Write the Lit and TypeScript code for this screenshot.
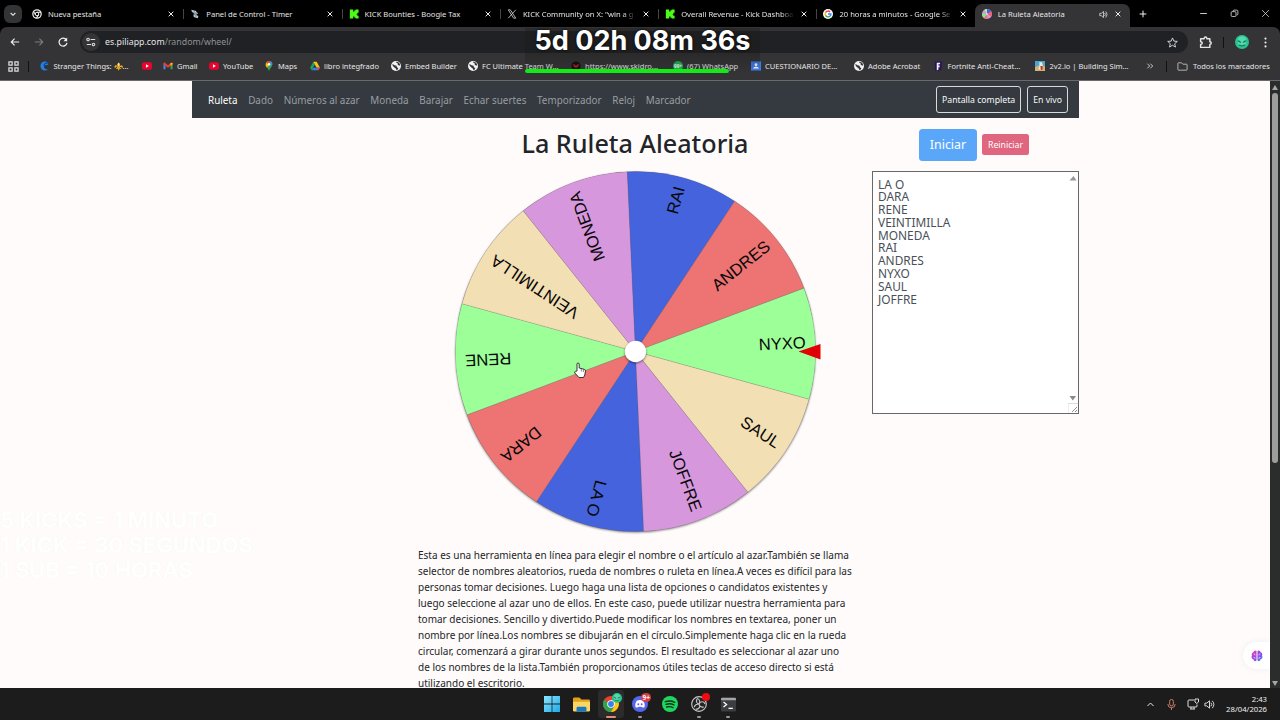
import { LitElement, html, css, svg } from "lit";
import { customElement } from "lit/decorators.js";
import { classMap } from "lit/directives/class-map.js";

const icon = (name: string, size = 10) =>
  html`<svg width=${size} height=${size} viewBox="0 0 24 24" style="flex:none;display:block">${glyphs[name]}</svg>`;

const youtube = svg`<rect x="0" y="3" width="24" height="18" rx="5" fill="#e8042c"/><path d="M9.5 8v8l7-4z" fill="#fff"/>`;
const globe = svg`<circle cx="12" cy="12" r="12" fill="#f2f2f2"/><path d="M3 8c4-1 4 3 8 3s2 5 5 5 1 4-2 6c-2-1-2-4-4-5S4 13 3 8zM12 2c0 4 5 2 4 5s4 3 6 4c0-5-4-9-10-9z" fill="#333436"/>`;
const kick = svg`<path d="M2 1h8v5h3V3h3V1h7v8h-3v3h-2v1h2v3h3v7h-7v-2h-3v-3h-3v5H2z" fill="#4dfc16"/>`;
const chrome = svg`
  <circle cx="12" cy="12" r="12" fill="#e9412f"/>
  <path d="M12 12 1.6 6A12 12 0 0 0 12 24l5-9z" fill="#2da54f"/>
  <path d="M12 12h-0l5.2 3L12 24A12 12 0 0 0 22.5 6.5H12z" fill="#fbc718"/>
  <circle cx="12" cy="12" r="5.7" fill="#fff"/><circle cx="12" cy="12" r="4.4" fill="#3b7fee"/>`;

const glyphs: Record<string, unknown> = {
  youtube,
  globe,
  kick,
  chrome,
  newtab: svg`<circle cx="12" cy="12" r="10" fill="none" stroke="#eee" stroke-width="3"/><circle cx="12" cy="12" r="4.2" fill="none" stroke="#eee" stroke-width="2.5"/><path d="M12 8h10M8.5 14 3.5 6M15.500 14l-5 8" stroke="#eee" stroke-width="2.500"/>`,
  panel: svg`<path d="M3 2l12 3v4L5 8zM9 6l8 2 3 4-9-2zM8 13l12 4-1 5-10-3z" fill="#b9cbd2"/><path d="M9 6l7 12" stroke="#8ba3ac" stroke-width="5"/>`,
  x: svg`<path d="M3 2h5l13 20h-5zM21 2 3 22" fill="none" stroke="#d0d0d0" stroke-width="2"/>`,
  google: svg`<circle cx="12" cy="12" r="12" fill="#fff"/><g fill="none" stroke-width="3.400"><path d="M17 7A7 7 0 0 0 6 8.500" stroke="#ea4335"/><path d="M6 8.500a7 7 0 0 0 0 7" stroke="#fbbc05"/><path d="M6 15.500A7 7 0 0 0 17 17" stroke="#34a853"/><path d="M17 17a7 7 0 0 0 2-5h-7" stroke="#4285f4"/></g>`,
  wheel: svg`<circle cx="12" cy="12" r="12" fill="#d797dd"/><path d="M12 12 6 2A12 12 0 0 1 12 0z" fill="#9cff98"/><path d="M12 12V0a12 12 0 0 1 10 6z" fill="#4463dc"/><path d="m12 12 10-6a12 12 0 0 1 0 12z" fill="#ee5f70"/><path d="m12 12-12-2a12 12 0 0 0 5 12z" fill="#83e682"/><path d="m12 12-7 10a12 12 0 0 0 9 2z" fill="#ee7373"/><circle cx="12" cy="12" r="2" fill="#fff"/>`,
  crunch: svg`<path d="M22 4A11 11 0 1 0 22 20c-4 1-9-1-10-5s3-6 10-6z" fill="#2382df"/><path d="M22 5c-5-1-10 2-10 7" fill="none" stroke="#123f9e" stroke-width="3"/>`,
  gmail: svg`<path d="M1 6v14h5V11z" fill="#4285f4"/><path d="M18 11v9h5V6z" fill="#34a853"/><path d="M1 5c0-2 3-2 4-1l7 6 7-6c2-1 4-1 4 1v3l-11 8L1 8z" fill="#e9402e"/><path d="m18 5 5 0v3l-5 4z" fill="#fbbc04"/>`,
  maps: svg`<path d="M12 0a8 8 0 0 0-8 8c0 6 6 9 8 16 2-7 8-10 8-16a8 8 0 0 0-8-8z" fill="#34a853"/><path d="M12 0a8 8 0 0 0-7 4l5 4 7-6z" fill="#ea4335"/><path d="m17 2-5 6 7 3c2-4 1-7-2-9z" fill="#4285f4"/><path d="m5 4-1 7 3 5 6-7z" fill="#fbbc04"/><circle cx="12" cy="8" r="3" fill="#fff"/>`,
  drive: svg`<path d="M8 2 0 16l4 6 8-14z" fill="#18a55b"/><path d="M8 2h8l8 14h-8z" fill="#fbc21c"/><path d="m8 16-4 6h16l4-6z" fill="#3b7cf0"/><path d="m16 16 4 6 4-6z" fill="#ea4335"/>`,
  skid: svg`<circle cx="12" cy="12" r="11" fill="#150c0d"/><path d="M4 7l6 2 2 3 2-3 6-2-3 7-5 3-5-3z" fill="#ad1e2b"/>`,
  whatsapp: svg`<circle cx="12" cy="12" r="12" fill="#20b45a"/><text x="12" y="16" text-anchor="middle" font-size="11" font-family="Noto Sans" font-weight="700" fill="#fff">99+</text>`,
  classroom: svg`<rect width="24" height="22" y="1" fill="#3e7cec"/><circle cx="12" cy="9" r="3.500" fill="#fff"/><path d="M5 18c1-6 13-6 14 0z" fill="#fff"/>`,
  fortnite: svg`<path d="M4 1h18l-2 21-15 2z" fill="#2b1458"/><path d="M9 4h8v4h-4v3h3v4h-3v6l-4 1z" fill="#f0eef6"/>`,
  building: svg`<path d="M0 0h24v24H0z" fill="#41a9d4"/><path d="M0 15 12 9l12 4v11H0z" fill="#d2b179"/><path d="M10 3h7l2 7-6 11-5-2 3-8z" fill="#f4e3cd"/><path d="M13 12h5v9h-4z" fill="#ab3828"/>`,
  apps: svg`<path d="M2 2h7v7H2zM15 2h7v7h-7zM2 15h7v7H2zM15 15h7v7h-7z" fill="none" stroke="#dedede" stroke-width="2.700"/>`,
  chevron: svg`<path d="m5 9 7 7 7-7" fill="none" stroke="#eee" stroke-width="3.200"/>`,
  up: svg`<path d="m4 16 8-8 8 8" fill="none" stroke="#eee" stroke-width="2.600"/>`,
  close: svg`<path d="m5 5 14 14M19 5 5 19" stroke="#ececec" stroke-width="3"/>`,
  exit: svg`<path d="m3 3 18 18M21 3 3 21" stroke="#ddd" stroke-width="2"/>`,
  minus: svg`<path d="M3 12h18" stroke="#ddd" stroke-width="2.400"/>`,
  restore: svg`<path d="M8 7V6q0-3 3-3h7q3 0 3 3v7q0 3-3 3" fill="none" stroke="#ddd" stroke-width="2.200"/><rect x="3" y="7" width="13" height="13" rx="3" fill="none" stroke="#ddd" stroke-width="2.200"/>`,
  plus: svg`<path d="M12 2v20M2 12h20" stroke="#f2f2f2" stroke-width="3"/>`,
  speaker: svg`<path d="M2 9h4l6-5v16l-6-5H2z" fill="none" stroke="#e8e8e8" stroke-width="2"/><path d="M15 8q4 4 0 8M18 4q7 8 0 16" fill="none" stroke="#e8e8e8" stroke-width="2"/>`,
  back: svg`<path d="M22 12H3M11 4l-8 8 8 8" fill="none" stroke="#eee" stroke-width="2.800"/>`,
  forward: svg`<path d="M2 12h19M13 4l8 8-8 8" fill="none" stroke="#7d7d7e" stroke-width="2.600"/>`,
  reload: svg`<path d="M20 7a9.500 9.500 0 1 0 1.500 7" fill="none" stroke="#eee" stroke-width="3"/><path d="M22 1v9h-9z" fill="#eee"/>`,
  tune: svg`<g fill="none" stroke="#dedede" stroke-width="2.600"><circle cx="5" cy="6" r="3"/><path d="M11 6h11M2 18h10"/><circle cx="18" cy="18" r="3"/></g>`,
  star: svg`<path d="m12 2 3 7 7.500.6-5.700 5 1.700 7.400-6.500-4-6.500 4 1.700-7.400-5.700-5L9 9z" fill="none" stroke="#ddd" stroke-width="2"/>`,
  puzzle: svg`<path d="M3 5h6.500c0-4 5-4 5 0H20v5.500c3.500 0 3.500 5 0 5V21H3v-5.500c4 0 4-5 0-5z" fill="none" stroke="#e4e4e4" stroke-width="2.700" stroke-linejoin="round"/>`,
  dots: svg`<g fill="#eee"><circle cx="12" cy="3.500" r="2.300"/><circle cx="12" cy="12" r="2.300"/><circle cx="12" cy="20.500" r="2.300"/></g>`,
  avatar: svg`<circle cx="12" cy="12" r="12" fill="#28c58e"/><path d="M5 6q7-8 14 0v8q-7 12-14 0z" fill="#54d8b0"/><path d="M4 9q5 0 7 4-5 1-7-4zM20 9q-5 0-7 4 5 1 7-4z" fill="#117857"/><path d="M7 17q5 3 10 0" stroke="#1b7659" stroke-width="2" fill="none"/>`,
  folder: svg`<path d="M2 5q0-1 1-1h7l3 3h8q1 0 1 1v11q0 1-1 1H3q-1 0-1-1z" fill="none" stroke="#bdbdbd" stroke-width="2"/>`,
  more: svg`<path d="m4 5 7 7-7 7M13 5l7 7-7 7" fill="none" stroke="#ddd" stroke-width="2.600"/>`,
  windows: svg`<defs><linearGradient id="w" x2="1" y2="1"><stop stop-color="#8de6fc"/><stop offset="1" stop-color="#1ba9eb"/></linearGradient></defs><path d="M0 0h11.400v11.400H0zM12.600 0H24v11.400H12.600zM0 12.600h11.400V24H0zM12.600 12.600H24V24H12.600z" fill="url(#w)"/>`,
  explorer: svg`<path d="M0 4q0-2 2-2h7l3 3h10q2 0 2 2v5H0z" fill="#e0a21a"/><path d="M0 8h24v12q0 2-2 2H2q-2 0-2-2z" fill="#fbd665"/><path d="M5 22v-5q0-2 2-2h10q2 0 2 2v5z" fill="#1579c6"/>`,
  discord: svg`<circle cx="12" cy="12" r="12" fill="#5765ee"/><path d="M7 7q5-2 10 0 3 5 2 9-2 2-4 1l-1-1h-4l-1 1q-2 1-4-1-1-4 2-9z" fill="#fff"/><circle cx="9.500" cy="12.500" r="1.500" fill="#5765ee"/><circle cx="14.500" cy="12.500" r="1.500" fill="#5765ee"/>`,
  spotify: svg`<circle cx="12" cy="12" r="12" fill="#1fd65f"/><path d="M5 8.500q8-2.500 14 1M6 12.500q7-2 12 1M7 16.500q5-1.500 9.500 1" fill="none" stroke="#15321f" stroke-width="2.100" stroke-linecap="round"/>`,
  obs: svg`<circle cx="12" cy="12" r="11" fill="#242426" stroke="#c7c7c7" stroke-width="1.700"/><path d="M12 12C7 11 7 5 11 3M12 12c2-5 8-4 9 0M12 12c3 4 0 8-5 8M12 12c-3 0-7 1-7 5M12 12c2-3 1-6-1-7M12 12c0 3 4 6 7 4" fill="none" stroke="#c7c7c7" stroke-width="1.700"/>`,
  terminal: svg`<rect y="1" width="24" height="22" rx="2" fill="#3b3d40"/><path d="M0 3q0-2 2-2h20q2 0 2 2v2H0z" fill="#a5a5a5"/><path d="m4 8 5 4-5 4M12 18h7" fill="none" stroke="#fff" stroke-width="2"/>`,
  mic: svg`<rect x="8" y="1" width="8" height="14" rx="4" fill="none" stroke="#d4866c" stroke-width="2"/><path d="M4 11q0 8 8 8t8-8M12 19v5" fill="none" stroke="#d4866c" stroke-width="2"/>`,
  network: svg`<path d="M14 4H4Q2 4 2 6v10q0 2 2 2h14q2 0 2-2v-3M8 18v4M14 18v4M6 22h10" fill="none" stroke="#ddd" stroke-width="2"/><path d="M16 2h7v6l-3.500 3L16 8z" fill="none" stroke="#ddd" stroke-width="2"/>`,
  brain: svg`<defs><linearGradient id="b" x2="1" y2="1"><stop stop-color="#f0448e"/><stop offset=".5" stop-color="#9a42ea"/><stop offset="1" stop-color="#3b8cf2"/></linearGradient></defs><path d="M11 2Q7-1 5 4 0 6 2 11q-3 6 3 8 2 6 6 2zM13 2q4-3 6 2 5 2 3 7 3 6-3 8-2 6-6 2z" fill="url(#b)"/><path d="M5 8h3v3M8 15H5M19 8h-3v3M16 15h3M8 18v-3M16 18v-3" stroke="#f6d1f2" fill="none" stroke-width="1.300"/>`,
};

const tabs = [
  ["newtab", "Nueva pestaña"],
  ["panel", "Panel de Control - Timer"],
  ["kick", "KICK Bounties - Boogie Tax"],
  ["x", "KICK Community on X: \"win a g"],
  ["kick", "Overall Revenue - Kick Dashboa"],
  ["google", "20 horas a minutos - Google Se"],
  ["wheel", "La Ruleta Aleatoria"],
];

// icon, label, slot width
const bookmarks: [string, string, number][] = [
  ["crunch", "Stranger Things: ⚜️...", 102.5],
  ["youtube", "", 21],
  ["gmail", "Gmail", 46],
  ["youtube", "YouTube", 55],
  ["maps", "Maps", 46],
  ["drive", "libro integfrado", 81],
  ["globe", "Embed Builder", 77],
  ["globe", "FC Ultimate Team W...", 103],
  ["skid", "https://www.skidro...", 102],
  ["whatsapp", "(67) WhatsApp", 78],
  ["classroom", "CUESTIONARIO DE...", 103],
  ["globe", "Adobe Acrobat", 79.5],
  ["fortnite", "Fortnite Anti-Cheat...", 102],
  ["building", "2v2.io | Building Sim...", 111],
];

const navItems = ["Ruleta", "Dado", "Números al azar", "Moneda", "Barajar", "Echar suertes", "Temporizador", "Reloj", "Marcador"];
const names = ["LA O", "DARA", "RENE", "VEINTIMILLA", "MONEDA", "RAI", "ANDRES", "NYXO", "SAUL", "JOFFRE"];
const colors = ["#4463dc", "#ee7373", "#9cff98", "#f3dfb4", "#d797dd"];

const description = [
  "Esta es una herramienta en línea para elegir el nombre o el artículo al azar.También se llama",
  "selector de nombres aleatorios, rueda de nombres o ruleta en línea.A veces es difícil para las",
  "personas tomar decisiones. Luego haga una lista de opciones o candidatos existentes y",
  "luego seleccione al azar uno de ellos. En este caso, puede utilizar nuestra herramienta para",
  "tomar decisiones. Sencillo y divertido.Puede modificar los nombres en textarea, poner un",
  "nombre por línea.Los nombres se dibujarán en el círculo.Simplemente haga clic en la rueda",
  "circular, comenzará a girar durante unos segundos. El resultado es seleccionar al azar uno",
  "de los nombres de la lista.También proporcionamos útiles teclas de acceso directo si está",
  "utilizando el escritorio.",
];

@customElement("browser-chrome")
class BrowserChrome extends LitElement {
  static styles = css`
    :host {
      display: block;
      height: 81px;
      box-sizing: border-box;
      background: #000;
      color: #e6e6e6;
      font: 7.600px "Noto Sans", sans-serif;
      border-bottom: 1px solid #6b6a6a;
      white-space: nowrap;
    }
    .tabs {
      display: flex;
      height: 27px;
      align-items: center;
    }
    .menu {
      display: grid;
      place-items: center;
      width: 18px;
      height: 18px;
      margin: 0 3px 0 4px;
      border-radius: 6px;
      background: #333436;
    }
    .tab {
      display: flex;
      align-items: center;
      box-sizing: border-box;
      width: 158.300px;
      height: 23px;
      padding: 0 8px 0 7px;
      gap: 6px;
    }
    .tab + .tab {
      background: linear-gradient(#444, #444) 0 50% / 1px 10px no-repeat;
    }
    .tab.active {
      width: 155px;
      height: 23px;
      margin-top: 4px;
      padding-bottom: 3px;
      border-radius: 7px 7px 0 0;
      background: #343436;
    }
    .label {
      flex: 1;
      overflow: hidden;
    }
    .fade {
      mask-image: linear-gradient(90deg, #000 88%, transparent);
    }
    .new {
      margin-left: 9px;
    }
    .window {
      display: flex;
      gap: 22px;
      margin: 0 10px 0 auto;
    }
    .toolbar {
      display: flex;
      align-items: center;
      height: 30px;
      background: #343436;
      border-radius: 7px 7px 0 0;
      padding: 0 9px 0 10px;
      box-sizing: border-box;
    }
    .address {
      display: flex;
      align-items: center;
      width: 1108px;
      height: 22px;
      box-sizing: border-box;
      margin-left: 12px;
      padding: 0 10px 0 2px;
      gap: 5px;
      border-radius: 11px;
      background: #202124;
      font-size: 8.800px;
    }
    .site {
      display: grid;
      place-items: center;
      width: 18px;
      height: 18px;
      border-radius: 9px;
      background: #343436;
    }
    .url {
      flex: 1;
    }
    .path {
      color: #8f9194;
    }
    .nav {
      display: flex;
      gap: 14px;
    }
    .divider {
      width: 1px;
      height: 11px;
      background: #111;
    }
    .end {
      display: flex;
      align-items: center;
      gap: 11px;
      margin-left: auto;
    }
    .bookmarks {
      display: flex;
      align-items: center;
      height: 23px;
      box-sizing: border-box;
      padding: 0 0 5px 8px;
      background: #343436;
      font-size: 7.500px;
    }
    .bookmarks .divider {
      margin: 0 10px 0 9px;
    }
    .bookmarks .last {
      margin: 0 10px 0 12px;
    }
    .bookmark {
      display: flex;
      align-items: center;
      gap: 4.500px;
      flex: none;
    }
    .all {
      display: flex;
      align-items: center;
      gap: 5px;
    }
  `;

  render() {
    return html`
      <div class="tabs">
        <div class="menu">${icon("chevron", 8)}</div>
        ${tabs.map(([glyph, label], i) => html`
          <div class=${classMap({ tab: true, active: i === 6 })}>
            ${icon(glyph, 10)}
            <span class=${classMap({ label: true, fade: label.length > 26 })}>${label}</span>
            ${i === 6 ? icon("speaker", 9) : ""}
            ${icon("close", 8)}
          </div>`)}
        <div class="new">${icon("plus", 8)}</div>
        <div class="window">${icon("minus", 9)}${icon("restore", 9)}${icon("exit", 9)}</div>
      </div>
      <div class="toolbar">
        <div class="nav">${icon("back")}${icon("forward")}${icon("reload")}</div>
        <div class="address">
          <span class="site">${icon("tune", 10)}</span>
          <span class="url">es.piliapp.com<span class="path">/random/wheel/</span></span>
          ${icon("star", 11)}
        </div>
        <div class="end">
          ${icon("puzzle", 13)}<span class="divider"></span>${icon("avatar", 14)}${icon("dots", 11)}
        </div>
      </div>
      <div class="bookmarks">
        ${icon("apps", 11)}
        <span class="divider"></span>
        ${bookmarks.map(([glyph, label, width]) => html`
          <span class="bookmark" style="width:${width}px">${icon(glyph)}<span>${label}</span></span>`)}
        ${icon("more", 8)}
        <span class="divider last"></span>
        <span class="all">${icon("folder", 11)}Todos los marcadores</span>
      </div>
    `;
  }
}

@customElement("name-wheel")
class NameWheel extends LitElement {
  static styles = css`
    :host {
      display: block;
      width: 380px;
      height: 364px;
    }
    svg {
      display: block;
      overflow: visible;
    }
    .rim {
      filter: drop-shadow(0.5px 1px 1px rgba(0, 0, 0, 0.5));
    }
    text {
      font: 16.600px "Liberation Sans", Arial, sans-serif;
      fill: #080808;
    }
  `;

  point(deg: number) {
    const a = (deg * Math.PI) / 180;
    return `${(180 * Math.cos(a)).toFixed(2)} ${(180 * Math.sin(a)).toFixed(2)}`;
  }

  render() {
    const start = 87.400;
    return html`
      <svg width="380" height="364" viewBox="-189.500 -182.500 380 364">
        <circle class="rim" r="180" fill="#777"/>
        ${names.map((_, i) => {
          const from = start + i * 36;
          return svg`<path d="M0 0L${this.point(from)}A180 180 0 0 1 ${this.point(from + 36)}Z"
            fill=${colors[i % 5]} stroke="#555" stroke-opacity=".35" stroke-width=".5"/>`;
        })}
        ${names.map((name, i) => svg`
          <text x="170.500" y="4.300" text-anchor="end" transform="rotate(${start + i * 36 + 18})">${name}</text>`)}
        <circle class="rim" r="10.700" fill="#fff"/>
        <path d="M163 0 185-7.500V8z" fill="#e10006"/>
      </svg>
    `;
  }
}

@customElement("wheel-page")
class WheelPage extends LitElement {
  static styles = css`
    :host {
      display: flex;
      height: 607px;
      overflow: hidden;
      background: #fffbfa;
      color: #212529;
      font: 10px "Noto Sans", sans-serif;
    }
    .container {
      width: 887px;
      margin-left: 192px;
    }
    .navbar {
      display: flex;
      align-items: center;
      height: 37px;
      box-sizing: border-box;
      padding: 0 11px 0 16px;
      background: #343a40;
      color: #9a9da0;
      white-space: nowrap;
    }
    .links {
      display: flex;
      flex: 1;
      gap: 10.700px;
      font-size: 9.880px;
    }
    .current {
      color: #fff;
    }
    .outline {
      box-sizing: border-box;
      height: 27px;
      margin-left: 6px;
      padding: 0 5px;
      border: 1px solid #d8dadb;
      border-radius: 3px;
      color: #f8f9fa;
      font-size: 8.700px;
      line-height: 26px;
    }
    .columns {
      display: flex;
    }
    .main {
      width: 434px;
      margin-left: 226px;
    }
    h1 {
      margin: 6px 0 0;
      height: 46px;
      font-size: 25.200px;
      line-height: 39px;
      font-weight: 500;
      text-align: center;
      white-space: nowrap;
    }
    name-wheel {
      margin: -1px 0 0 27.500px;
    }
    .description {
      margin-top: 14px;
      line-height: 16px;
      white-space: nowrap;
    }
    .side {
      width: 207px;
      margin-left: 20px;
    }
    .actions {
      display: flex;
      justify-content: center;
      align-items: center;
      gap: 5px;
      height: 53px;
      padding-right: 3px;
    }
    .start {
      display: grid;
      place-items: center;
      width: 58px;
      height: 32px;
      border-radius: 3.500px;
      background: #5aa7f9;
      color: #fff;
      font-size: 12.400px;
    }
    .reset {
      display: grid;
      place-items: center;
      width: 47px;
      height: 21px;
      border-radius: 2.500px;
      background: #e0657f;
      color: #fff;
      font-size: 8.700px;
    }
    .names {
      display: flex;
      justify-content: space-between;
      box-sizing: border-box;
      height: 243px;
      padding: 5.500px 0 0 5px;
      border: 1px solid #686868;
      background: #fff;
      color: #495057;
      font-size: 11.900px;
      line-height: 12.800px;
      white-space: pre;
    }
    .gutter {
      display: flex;
      flex-direction: column;
      justify-content: space-between;
      align-items: flex-end;
      margin-top: -3px;
    }
    .gutter svg {
      display: block;
    }
    .scrollbar {
      display: flex;
      flex-direction: column;
      align-items: center;
      width: 10px;
      margin-left: auto;
      padding: 4px 0 1px;
      box-sizing: border-box;
      background: #2b2c2c;
    }
    .thumb {
      width: 6px;
      height: 370px;
      margin: 3px 0 auto;
      border-radius: 3px;
      background: #9d9e9c;
    }
  `;

  render() {
    return html`
      <div class="container">
        <div class="navbar">
          <div class="links">
            ${navItems.map((item, i) => html`<span class=${classMap({ current: i === 0 })}>${item}</span>`)}
          </div>
          <span class="outline">Pantalla completa</span>
          <span class="outline">En vivo</span>
        </div>
        <div class="columns">
          <div class="main">
            <h1>La Ruleta Aleatoria</h1>
            <name-wheel></name-wheel>
            <div class="description">${description.map((line) => html`<div>${line}</div>`)}</div>
          </div>
          <div class="side">
            <div class="actions">
              <span class="start">Iniciar</span>
              <span class="reset">Reiniciar</span>
            </div>
            <div class="names"><div>${names.map((name) => html`<div>${name}</div>`)}</div><div class="gutter">
                <svg width="10" height="6"><path d="M1.500 5.500h7L5.500 1z" fill="#969696"/></svg>
                <svg width="10" height="18">
                  <path d="M1.500 1h6.500L4.800 5.500z" fill="#8a8a8a"/>
                  <path d="M0 18V8.500h10" fill="none" stroke="#ddd"/>
                  <path d="m4 17 5-5M7 17l2-2" stroke="#777" stroke-width=".8"/>
                </svg>
              </div></div>
          </div>
        </div>
      </div>
      <div class="scrollbar">
        <svg width="8" height="5"><path d="M1 5h6L4 0z" fill="#a5a5a5"/></svg>
        <div class="thumb"></div>
        <svg width="8" height="6"><path d="M1 0h6L4 5z" fill="#a5a5a5"/></svg>
      </div>
    `;
  }
}

@customElement("task-bar")
class TaskBar extends LitElement {
  static styles = css`
    :host {
      display: flex;
      align-items: center;
      height: 32px;
      background: #1c1c1c;
      color: #f0f0f0;
      font: 7.700px "Noto Sans", sans-serif;
    }
    .apps {
      display: flex;
      gap: 3.400px;
      margin-left: 539px;
    }
    .app {
      position: relative;
      display: grid;
      place-items: center;
      width: 26px;
      height: 28px;
      border-radius: 3px;
    }
    .focused {
      background: #2c2b2b;
    }
    .running::after {
      content: "";
      position: absolute;
      bottom: 0;
      left: 11px;
      width: 4px;
      height: 2px;
      border-radius: 1px;
      background: #989898;
    }
    .focused::after {
      left: 8px;
      width: 10px;
      background: #e38d78;
    }
    .badge {
      position: absolute;
      top: 3px;
      right: 2px;
      display: grid;
      place-items: center;
      width: 10px;
      height: 9px;
      border-radius: 5px;
      color: #fff;
      font-size: 6.500px;
      font-weight: 700;
    }
    .red {
      background: #d73c45;
    }
    .dot {
      width: 8px;
      height: 8px;
      background: #f10b10;
    }
    .tray {
      display: flex;
      align-items: center;
      margin-left: auto;
      padding-right: 13px;
    }
    .mic {
      margin: 0 10px 0 11px;
    }
    .sound {
      margin: 0 11px 0 5px;
    }
    .clock {
      line-height: 10.500px;
      text-align: right;
    }
  `;

  render() {
    return html`
      <div class="apps">
        <div class="app">${icon("windows", 16)}</div>
        <div class="app">${icon("explorer", 17)}</div>
        <div class="app focused running">${icon("chrome", 16)}<span class="badge">${icon("avatar", 10)}</span></div>
        <div class="app running">${icon("discord", 16)}<span class="badge red">9+</span></div>
        <div class="app">${icon("spotify", 16)}</div>
        <div class="app running">${icon("obs", 16)}<span class="badge dot"></span></div>
        <div class="app running">${icon("terminal", 15)}</div>
      </div>
      <div class="tray">
        ${icon("up", 9)}
        <span class="mic">${icon("mic", 11)}</span>
        ${icon("network", 12)}
        <span class="sound">${icon("speaker", 11)}</span>
        <div class="clock">2:43<br>28/04/2026</div>
      </div>
    `;
  }
}

@customElement("app-root")
class AppRoot extends LitElement {
  static styles = css`
    :host {
      display: block;
      position: relative;
      width: 1280px;
      height: 720px;
      overflow: hidden;
    }
    .countdown {
      position: absolute;
      left: 525px;
      top: 28px;
      width: 235px;
      height: 45px;
      box-sizing: border-box;
      background: linear-gradient(rgba(25, 25, 25, 0.35) 60%, transparent);
      color: #fff;
      font: 700 27px/26px Inter, sans-serif;
      text-align: center;
      text-shadow: 0 0 3px #000;
      white-space: nowrap;
    }
    .progress {
      position: absolute;
      left: 0;
      bottom: 0;
      width: 204px;
      height: 4px;
      border-radius: 2px;
      background: #10ed12;
    }
    .rates {
      position: absolute;
      left: 0;
      top: 508px;
      color: #fff;
      font: 700 22px/25px Inter, sans-serif;
      text-shadow: 0 0 1px #f3f0f0;
      white-space: nowrap;
    }
    .assistant {
      position: absolute;
      right: 10px;
      top: 642px;
      display: flex;
      align-items: center;
      width: 27px;
      height: 27px;
      padding-left: 8px;
      box-sizing: border-box;
      border-radius: 14px 0 0 14px;
      background: #fff;
      box-shadow: 0 0 7px rgba(0, 0, 0, 0.06);
      clip-path: inset(-10px 0 -10px -10px);
    }
    .pointer {
      position: absolute;
      left: 573px;
      top: 362px;
    }
  `;

  render() {
    return html`
      <browser-chrome></browser-chrome>
      <wheel-page></wheel-page>
      <task-bar></task-bar>
      <div class="rates">
        <div>5 KICKS = 1 MINUTO</div>
        <div>1 KICK = 30 SEGUNDOS</div>
        <div>1 SUB = 10 HORAS</div>
      </div>
      <div class="assistant">${icon("brain", 12)}</div>
      <div class="countdown">5d 02h 08m 36s<div class="progress"></div></div>
      <svg class="pointer" width="14" height="17" viewBox="0 0 14 17">
        <path d="M4 9V2q0-1 1-1t1.200 1v4l5 1.300q1.300.3 1.300 1.700l-.7 4-1.300 2.500H6L1.800 11q-.6-1.500.7-1.700z" fill="#fff" stroke="#222" stroke-width=".9"/>
        <path d="M8.300 7v2.500M10.400 7.500V10" stroke="#333" stroke-width=".6"/>
      </svg>
    `;
  }
}
